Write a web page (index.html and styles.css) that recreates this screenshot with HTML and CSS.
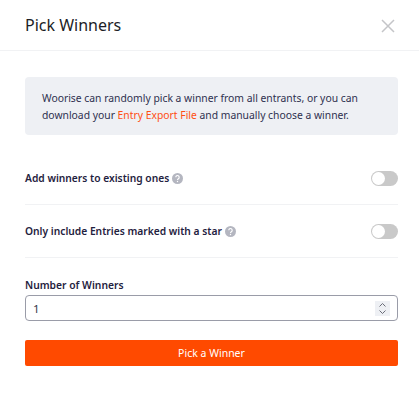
FILE: index.html
```html
<!DOCTYPE html>
<html lang="en">
<head>
<meta charset="utf-8">
<title>Pick Winners</title>
<link rel="stylesheet" href="styles.css">
</head>
<body>
<div class="modal">
  <header class="head">
    <h1 class="title">Pick Winners</h1>
    <svg class="close" width="14" height="14" viewBox="0 0 14 14"><path d="M1 1l12 12M13 1L1 13"/></svg>
  </header>
  <main class="body">
    <p class="note">Woorise can randomly pick a winner from all entrants, or you can download your <a class="link">Entry Export File</a> and manually choose a winner.</p>
    <div class="row first">
      <span class="label">Add winners to existing ones
        <svg class="help" width="11" height="11" viewBox="0 0 11 11"><circle cx="5.5" cy="5.5" r="5.5"/><path d="M3.8 4.3a1.7 1.7 0 1 1 2.6 1.4c-.6.4-.9.6-.9 1.3"/><circle class="dot" cx="5.5" cy="8.5" r=".7"/></svg>
      </span>
      <span class="toggle"><span class="knob"></span></span>
    </div>
    <div class="row">
      <span class="label">Only include Entries marked with a star
        <svg class="help" width="11" height="11" viewBox="0 0 11 11"><circle cx="5.5" cy="5.5" r="5.5"/><path d="M3.8 4.3a1.7 1.7 0 1 1 2.6 1.4c-.6.4-.9.6-.9 1.3"/><circle class="dot" cx="5.5" cy="8.5" r=".7"/></svg>
      </span>
      <span class="toggle"><span class="knob"></span></span>
    </div>
    <div class="field">
      <div class="field-label">Number of Winners</div>
      <div class="input">
        <span class="value">1</span>
        <span class="stepper">
          <svg width="15" height="15" viewBox="0 0 15 15"><path d="M4.5 5.5l3-3 3 3M4.5 9.5l3 3 3-3"/></svg>
        </span>
      </div>
    </div>
    <button class="submit" type="button">Pick a Winner</button>
  </main>
</div>
</body>
</html>
```
FILE: styles.css
```css
* { box-sizing: border-box; }
html, body { margin: 0; padding: 0; background: #fff; }
body { font-family: "Noto Sans", "Open Sans", sans-serif; color: #1f2240; width: 419px; height: 400px; overflow: hidden; }
.head { height: 51px; padding: 0 24px 0 25px; display: flex; align-items: center; justify-content: space-between; border-bottom: 1px solid #f1f2f4; }
.title { margin: 0; font-size: 16px; font-weight: 400; color: #1c1d26; line-height: 50px; }
.close { margin-top: 1px; }
.close path { stroke: #c4c5c8; stroke-width: 1.5; fill: none; }
.body { padding: 26px 21px 0 25px; }
.note { margin: 0; height: 58px; padding: 13px 17px; background: #eef0f4; border-radius: 4px; font-size: 10.35px; line-height: 16.5px; color: #2f3150; }
.link { color: #ff4f14; }
.row { height: 53px; display: flex; align-items: center; justify-content: space-between; border-bottom: 1px solid #f1f2f4; }
.row.first { margin-top: 17px; }
.label { display: flex; align-items: center; gap: 3px; font-size: 10.25px; font-weight: 600; color: #1f2240; }
.help circle { fill: #b4b6c0; }
.help path { fill: none; stroke: #fff; stroke-width: 1.1; }
.help .dot { fill: #fff; }
.toggle { width: 27px; height: 15px; background: #c9c9c9; border-radius: 8px; display: flex; align-items: center; padding-left: 1px; }
.knob { width: 13px; height: 13px; background: #fff; border-radius: 50%; }
.field { margin-top: 19px; }
.field-label { font-size: 10.3px; font-weight: 600; line-height: 16px; color: #1f2240; }
.input { margin-top: 2px; height: 26px; border: 1px solid #9a9ca8; border-radius: 4px; display: flex; align-items: center; justify-content: space-between; padding: 0 7px; }
.value { font-size: 11.5px; color: #33354a; }
.stepper { display: flex; width: 15px; height: 15px; background: #eef0f4; }
.stepper path { fill: none; stroke: #6b6d78; stroke-width: 1; }
.submit { display: block; width: 100%; height: 26px; margin-top: 19px; border: 0; border-radius: 2px; background: #ff4a00; color: #fff; font: 400 10.5px "Noto Sans", sans-serif; }
```
